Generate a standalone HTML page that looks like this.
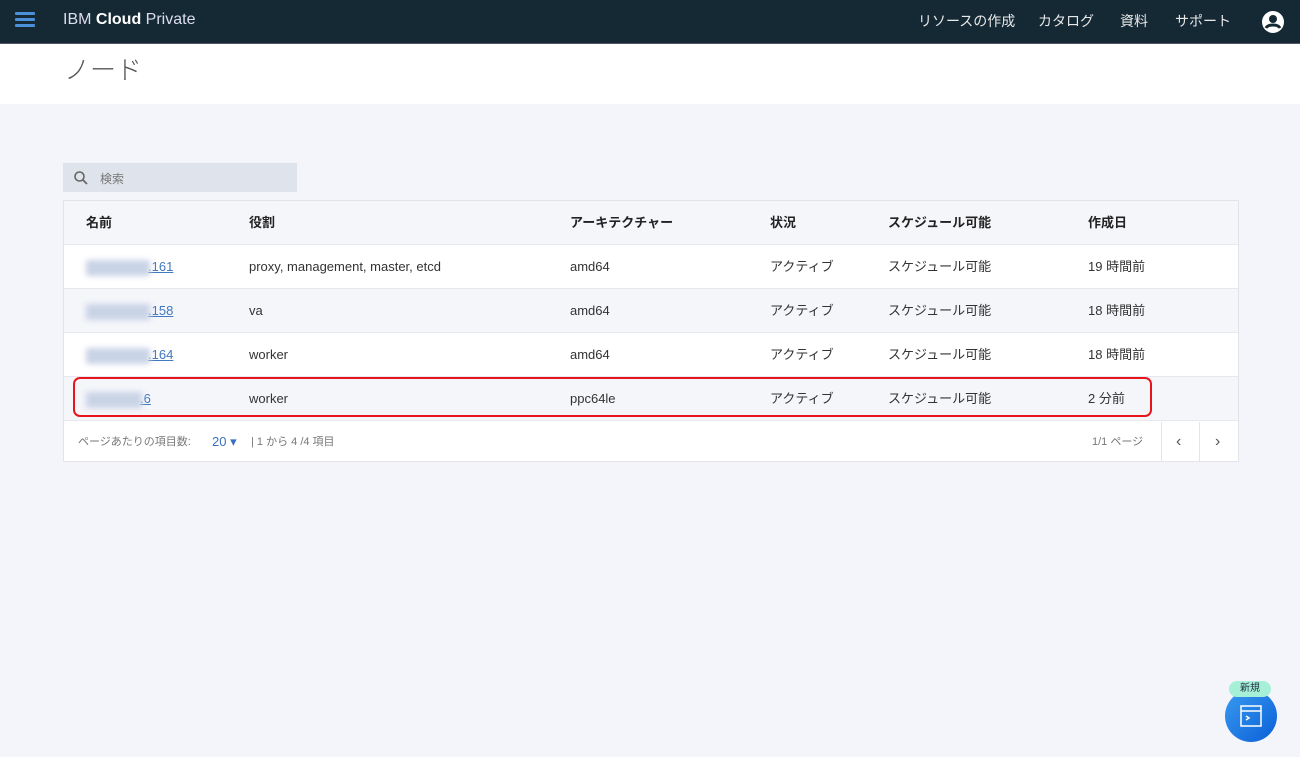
<!DOCTYPE html>
<html><head><meta charset="utf-8">
<style>
*{margin:0;padding:0;box-sizing:border-box}
body{width:1300px;height:757px;background:#f4f5fa;font-family:"Liberation Sans","Noto Sans CJK JP",sans-serif;position:relative;overflow:hidden;color:#333}
.hdr{position:absolute;left:0;top:0;width:1300px;height:44px;background:#152935;border-bottom:1px solid #556}
.ham{position:absolute;left:15px;top:12px;width:20px}
.ham i{display:block;height:3px;background:#4a8fd8;margin-bottom:3px;border-radius:1px}
.logo{position:absolute;left:63px;top:11px;color:#dde;font-size:16px}
.nav{position:absolute;top:11px;color:#e8e8e8;font-size:14px}
.band{position:absolute;left:0;top:44px;width:1300px;height:60px;background:#fff}
.title{position:absolute;left:64px;top:50px;font-size:26px;color:#555;font-weight:300}
.search{position:absolute;left:63px;top:163px;width:234px;height:29px;background:#dfe3ec}
.search span{position:absolute;left:37px;top:7px;font-size:12px;color:#777}
.tbl{position:absolute;left:63px;top:200px;width:1176px;height:262px;border:1px solid #e2e4ea;background:#fff}
.row{position:absolute;left:0;width:1174px;height:44px;border-bottom:1px solid #e6e8ee;font-size:13px;color:#333}
.row>span{position:absolute;top:0;line-height:43px;height:43px}
.th{font-weight:bold;color:#222}
.g{background:#f5f6fa}
.ip{color:#4178be;text-decoration:underline}
.blur{display:inline-block;width:64px;height:16px;background:#c9d3e6;filter:blur(3px);vertical-align:middle;margin-right:-2px}
.red{position:absolute;left:73px;top:377px;width:1079px;height:40px;border:2.5px solid #e8141c;border-radius:7px}
.ft{position:absolute;left:0;top:221px;width:1174px;height:40px;font-size:11px;color:#777}
.ft>span{position:absolute;top:0;line-height:40px}
.fab{position:absolute;left:1225px;top:690px;width:52px;height:52px;border-radius:50%;background:linear-gradient(135deg,#3a9bf0,#0a5fd8)}
.tag{position:absolute;left:1229px;top:681px;width:42px;height:16px;border-radius:8px;background:#a7f0d8;font-size:10px;text-align:center;line-height:16px;color:#234}
</style></head><body>
<div class="hdr">
<div class="ham"><i></i><i></i><i></i></div>
<div class="logo">IBM <b style="color:#fff">Cloud</b> Private</div>
<div class="nav" style="left:918px">リソースの作成</div>
<div class="nav" style="left:1038px">カタログ</div>
<div class="nav" style="left:1120px">資料</div>
<div class="nav" style="left:1175px">サポート</div>
<svg style="position:absolute;left:1261px;top:10px" width="24" height="24" viewBox="0 0 24 24"><circle cx="12" cy="12" r="11" fill="#fff"/><circle cx="12" cy="9" r="4" fill="#152935"/><path d="M5 18c2-4 12-4 14 0" stroke="#152935" stroke-width="3" fill="none"/></svg>
</div>
<div class="band"></div>
<div class="title">ノード</div>
<div class="search"><svg style="position:absolute;left:10px;top:7px" width="16" height="16" viewBox="0 0 16 16"><circle cx="6.5" cy="6.5" r="4.5" stroke="#666" stroke-width="1.6" fill="none"/><path d="M10 10l4 4" stroke="#666" stroke-width="1.8"/></svg><span>検索</span></div>
<div class="tbl">
<div class="row th g" style="top:0"><span style="left:22px">名前</span><span style="left:185px">役割</span><span style="left:506px">アーキテクチャー</span><span style="left:706px">状況</span><span style="left:824px">スケジュール可能</span><span style="left:1024px">作成日</span></div>
<div class="row" style="top:44px"><span style="left:22px"><i class="blur"></i><span class="ip">.161</span></span><span style="left:185px">proxy, management, master, etcd</span><span style="left:506px">amd64</span><span style="left:706px">アクティブ</span><span style="left:824px">スケジュール可能</span><span style="left:1024px">19 時間前</span></div>
<div class="row g" style="top:88px"><span style="left:22px"><i class="blur"></i><span class="ip">.158</span></span><span style="left:185px">va</span><span style="left:506px">amd64</span><span style="left:706px">アクティブ</span><span style="left:824px">スケジュール可能</span><span style="left:1024px">18 時間前</span></div>
<div class="row" style="top:132px"><span style="left:22px"><i class="blur"></i><span class="ip">.164</span></span><span style="left:185px">worker</span><span style="left:506px">amd64</span><span style="left:706px">アクティブ</span><span style="left:824px">スケジュール可能</span><span style="left:1024px">18 時間前</span></div>
<div class="row g" style="top:176px"><span style="left:22px"><i class="blur" style="width:56px"></i><span class="ip">.6</span></span><span style="left:185px">worker</span><span style="left:506px">ppc64le</span><span style="left:706px">アクティブ</span><span style="left:824px">スケジュール可能</span><span style="left:1024px">2 分前</span></div>
<div class="ft">
<span style="left:14px">ページあたりの項目数:</span>
<span style="left:148px;color:#3b6fc0;font-size:13px">20 ▾</span>
<span style="left:187px">| 1 から 4 /4 項目</span>
<span style="left:1028px">1/1 ページ</span>
<div style="position:absolute;left:1097px;top:0;width:1px;height:40px;background:#e2e4ea"></div>
<div style="position:absolute;left:1135px;top:0;width:1px;height:40px;background:#e2e4ea"></div>
<span style="left:1112px;font-size:16px;color:#555">‹</span>
<span style="left:1151px;font-size:16px;color:#555">›</span>
</div>
</div>
<div class="red"></div>
<div class="fab"><svg style="position:absolute;left:14px;top:14px" width="24" height="24" viewBox="0 0 24 24"><rect x="2" y="2" width="20" height="20" fill="none" stroke="#fff" stroke-width="1.5"/><path d="M2 7h20M7 12l3 2-3 2" stroke="#fff" stroke-width="1.5" fill="none"/></svg></div>
<div class="tag">新規</div>
</body></html>
